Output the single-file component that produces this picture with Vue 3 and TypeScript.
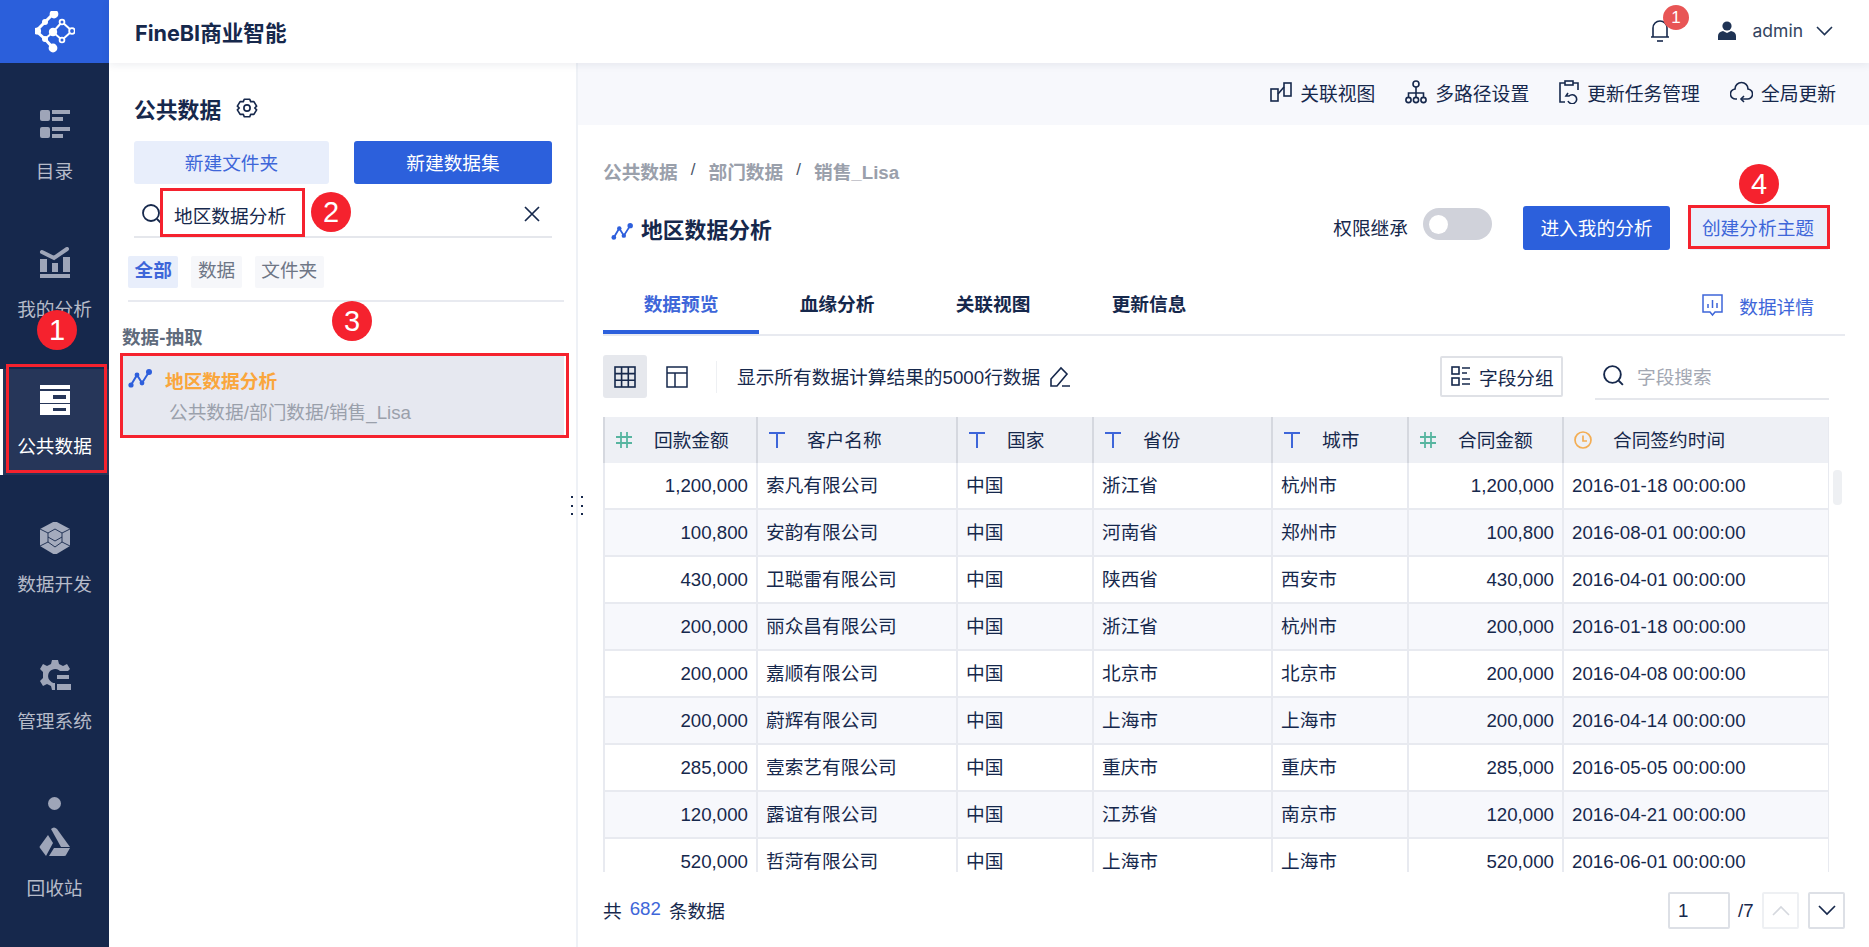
<script setup lang="ts">
interface NavItem { key: string; label: string; active?: boolean }
const navTop: NavItem[] = [
  { key: 'catalog', label: '目录' },
  { key: 'analysis', label: '我的分析' },
  { key: 'public', label: '公共数据', active: true },
  { key: 'dev', label: '数据开发' },
  { key: 'admin', label: '管理系统' },
]
const previewTabs = ['数据预览', '血缘分析', '关联视图', '更新信息']
const columns = [
  { type: 'num', label: '回款金额' },
  { type: 'text', label: '客户名称' },
  { type: 'text', label: '国家' },
  { type: 'text', label: '省份' },
  { type: 'text', label: '城市' },
  { type: 'num', label: '合同金额' },
  { type: 'time', label: '合同签约时间' },
]
const rows = [
  ['1,200,000', '索凡有限公司', '中国', '浙江省', '杭州市', '1,200,000', '2016-01-18 00:00:00'],
  ['100,800', '安韵有限公司', '中国', '河南省', '郑州市', '100,800', '2016-08-01 00:00:00'],
  ['430,000', '卫聪雷有限公司', '中国', '陕西省', '西安市', '430,000', '2016-04-01 00:00:00'],
  ['200,000', '丽众昌有限公司', '中国', '浙江省', '杭州市', '200,000', '2016-01-18 00:00:00'],
  ['200,000', '嘉顺有限公司', '中国', '北京市', '北京市', '200,000', '2016-04-08 00:00:00'],
  ['200,000', '蔚辉有限公司', '中国', '上海市', '上海市', '200,000', '2016-04-14 00:00:00'],
  ['285,000', '壹索艺有限公司', '中国', '重庆市', '重庆市', '285,000', '2016-05-05 00:00:00'],
  ['120,000', '露谊有限公司', '中国', '江苏省', '南京市', '120,000', '2016-04-21 00:00:00'],
  ['520,000', '哲菏有限公司', '中国', '上海市', '上海市', '520,000', '2016-06-01 00:00:00'],
]
const isNumCol = (i: number) => i === 0 || i === 5
</script>

<template>
  <div class="app">
    <aside class="sidebar">
      <div class="logo">
        <svg width="40" height="42" viewBox="0 0 40 42">
          <g stroke="#fff" stroke-width="2.4" fill="none">
            <path d="M19 2 L10 11 L1 20 L10 28 L18 37" stroke-width="3" />
            <path d="M10 28 L18 21 L27 29 L37 20 L27 11 L18 21" stroke-width="2" />
          </g>
          <g fill="#fff">
            <circle cx="19" cy="3" r="4.4" />
            <circle cx="10" cy="11" r="3" />
            <circle cx="2.5" cy="20" r="3.6" />
            <circle cx="18" cy="21" r="4.2" />
            <circle cx="10" cy="28" r="3" />
            <circle cx="18" cy="37" r="4.4" />
          </g>
          <g fill="#2b5fdb" stroke="#fff" stroke-width="1.8">
            <circle cx="27" cy="11" r="2.4" />
            <circle cx="37" cy="20" r="2.8" />
            <circle cx="27" cy="29" r="2.4" />
          </g>
        </svg>
      </div>
      <nav class="nav">
        <div v-for="item in navTop" :key="item.key" class="nav-item" :class="{ active: item.active }">
          <svg class="nav-icon" width="32" height="32" viewBox="0 0 32 32">
            <g v-if="item.key === 'catalog'" fill="#9ea5b8">
              <rect x="1" y="1" width="10" height="11" rx="2" />
              <rect x="13" y="1" width="18" height="4" />
              <rect x="13" y="8" width="11" height="4" />
              <rect x="1" y="18" width="10" height="11" rx="2" />
              <rect x="13" y="18" width="18" height="4" />
              <rect x="13" y="25" width="11" height="4" />
            </g>
            <g v-else-if="item.key === 'analysis'" fill="#9ea5b8">
              <path d="M3 5 L15 11 L28 2" fill="none" stroke="#9ea5b8" stroke-width="4" stroke-linecap="round" />
              <rect x="1" y="12" width="7" height="13" />
              <rect x="13" y="16" width="6" height="9" />
              <rect x="24" y="10" width="7" height="15" />
              <rect x="1" y="27" width="30" height="4" />
            </g>
            <g v-else-if="item.key === 'public'" fill="#fff">
              <rect x="1" y="1" width="30" height="4" />
              <path fill-rule="evenodd" d="M1 7 H31 V19 H1 Z M14 11 V15 H27 V11 Z" />
              <path fill-rule="evenodd" d="M1 20 H31 V31 H1 Z M14 24 V27 H27 V24 Z" />
            </g>
            <g v-else-if="item.key === 'dev'">
              <path d="M16 -1 L31 7 V24 L16 33 L1 24 V7 Z" fill="#a4abbd" />
              <path d="M16 7 L23 11 V20 L16 25 L9 20 V11 Z M1 7 L9 11 M31 7 L23 11 M9 20 L1 24 M23 20 L31 24 M9 15 L16 19 L23 15" fill="none" stroke="#16284c" stroke-width="0.9" />
            </g>
            <g v-else fill="#9ea5b8">
              <path d="M13 1 H19 L20 5 L24 7 L28 5 L31 10 L29 12 H21 A7 7 0 1 0 16 24 V31 H13 L12 27 L8 25 L4 27 L1 22 L4 19 V13 L1 10 L4 5 L8 7 L12 5 Z" />
              <rect x="18" y="16" width="12" height="4" />
              <rect x="18" y="25" width="14" height="6" />
            </g>
          </svg>
          <span class="nav-label">{{ item.label }}</span>
        </div>
        <div class="nav-dot"></div>
        <div class="nav-item">
          <svg class="nav-icon" width="32" height="32" viewBox="0 0 32 32">
            <g fill="#9ea5b8">
              <path d="M12 3 Q15 0 18 3 L31 21 H22 Z" />
              <path d="M9 9 L14 17 L7 30 L1 22 Q0 21 1 20 Z" />
              <path d="M15 22 H31 L27 29 Q27 30 25 30 H10 Z" />
            </g>
          </svg>
          <span class="nav-label">回收站</span>
        </div>
      </nav>
    </aside>

    <div class="main">
      <header class="topbar">
        <div class="brand">FineBI商业智能</div>
        <div class="top-right">
          <svg class="bell" width="20" height="23" viewBox="0 0 20 23" fill="none" stroke="#16284c" stroke-width="1.6">
            <path d="M1 18 H19 M3 18 V9 A7 7 0 0 1 17 9 V18" />
            <path d="M7 22 H13" />
          </svg>
          <svg class="user" width="18" height="19" viewBox="0 0 18 19" fill="#1f3354">
            <circle cx="9" cy="5" r="4.6" />
            <path d="M0 19 V15 Q0 11 5 10 L9 12 L13 10 Q18 11 18 15 V19 Z" />
          </svg>
          <span class="user-name">admin</span>
          <svg width="17" height="10" viewBox="0 0 17 10" fill="none" stroke="#1f3354" stroke-width="1.6">
            <path d="M1 1 L8.5 8.5 L16 1" />
          </svg>
        </div>
      </header>

      <div class="body">
        <section class="panel">
          <div class="panel-title">
            <span>公共数据</span>
            <svg width="22" height="22" viewBox="0 0 24 24" fill="none" stroke="#16284c" stroke-width="1.8" stroke-linejoin="round">
              <path d="M9 2.5 H15 L16 5 L19.5 5 L22.5 10 L20.5 12 L22.5 14 L19.5 19 L16 19 L15 21.5 H9 L8 19 L4.5 19 L1.5 14 L3.5 12 L1.5 10 L4.5 5 L8 5 Z" />
              <circle cx="12" cy="12" r="3.4" />
            </svg>
          </div>
          <div class="panel-actions">
            <div class="btn btn-light folder-btn">新建文件夹</div>
            <div class="btn btn-primary set-btn">新建数据集</div>
          </div>
          <div class="panel-search">
            <svg width="22" height="22" viewBox="0 0 22 22" fill="none" stroke="#16284c" stroke-width="1.8">
              <circle cx="10" cy="10" r="8" />
              <path d="M16 16 L20 20" />
            </svg>
            <span class="search-value">地区数据分析</span>
            <svg class="search-clear" width="16" height="16" viewBox="0 0 16 16" fill="none" stroke="#16284c" stroke-width="1.7">
              <path d="M1 1 L15 15 M15 1 L1 15" />
            </svg>
          </div>
          <div class="filter-tabs">
            <span class="filter on">全部</span>
            <span class="filter">数据</span>
            <span class="filter">文件夹</span>
          </div>
          <div class="section-label">数据-抽取</div>
          <div class="result">
            <div class="result-head">
              <svg width="24" height="22" viewBox="0 0 24 22" fill="none">
                <path d="M3 17 L9 7 L14 15 L21 4" stroke="#2e5fdc" stroke-width="2" />
                <circle cx="3" cy="17" r="2.6" fill="#2e5fdc" />
                <circle cx="9" cy="7" r="2.4" fill="#2e5fdc" />
                <circle cx="14" cy="15" r="2.4" fill="#2e5fdc" />
                <circle cx="21" cy="4" r="3" fill="#2e5fdc" />
              </svg>
              <span class="result-name">地区数据分析</span>
            </div>
            <div class="result-path">公共数据/部门数据/销售_Lisa</div>
          </div>
        </section>

        <section class="content">
          <div class="actions-bar">
            <div class="action">
              <svg width="22" height="20" viewBox="0 0 22 20" fill="none" stroke="#16284c" stroke-width="1.6">
                <rect x="1" y="7" width="7" height="12" />
                <rect x="14" y="1" width="7" height="13" />
                <path d="M8 12 L14 5" />
              </svg>
              <span>关联视图</span>
            </div>
            <div class="action">
              <svg width="22" height="24" viewBox="0 0 22 24" fill="none" stroke="#16284c" stroke-width="1.6">
                <circle cx="11" cy="4" r="3" />
                <circle cx="3.5" cy="20" r="2.6" />
                <circle cx="11" cy="20" r="2.6" />
                <circle cx="18.5" cy="20" r="2.6" />
                <path d="M11 7 V17 M3.5 17 V13 H18.5 V17" />
              </svg>
              <span>多路径设置</span>
            </div>
            <div class="action">
              <svg width="20" height="24" viewBox="0 0 20 24" fill="none" stroke="#16284c" stroke-width="1.6">
                <path d="M6 3 H1 V22 H6 M14 3 H19 V10" />
                <rect x="6" y="1" width="8" height="4" />
                <path d="M9 13 L7 16 L10 16 A4.5 4.5 0 1 1 9 21" />
              </svg>
              <span>更新任务管理</span>
            </div>
            <div class="action">
              <svg width="23" height="24" viewBox="0 0 23 24" fill="none" stroke="#16284c" stroke-width="1.6">
                <path d="M7 19 H6 A5 5 0 0 1 5 9 A6.5 6.5 0 0 1 18 9 A5 5 0 0 1 17 19 H11" />
                <path d="M14 16 L11 19 L14 22" />
              </svg>
              <span>全局更新</span>
            </div>
          </div>

          <div class="detail">
            <div class="crumbs">
              <span>公共数据</span><i>/</i><span>部门数据</span><i>/</i><span>销售_Lisa</span>
            </div>
            <div class="title-row">
              <svg class="title-icon" width="22" height="20" viewBox="0 0 24 22" fill="none">
                <path d="M3 17 L9 7 L14 15 L21 4" stroke="#2e5fdc" stroke-width="2" />
                <circle cx="3" cy="17" r="2.6" fill="#2e5fdc" />
                <circle cx="9" cy="7" r="2.4" fill="#2e5fdc" />
                <circle cx="14" cy="15" r="2.4" fill="#2e5fdc" />
                <circle cx="21" cy="4" r="3" fill="#2e5fdc" />
              </svg>
              <h1 class="title">地区数据分析</h1>
              <span class="inherit">权限继承</span>
              <span class="toggle"><span class="knob"></span></span>
              <div class="btn btn-primary enter-btn">进入我的分析</div>
              <div class="btn btn-light create-btn">创建分析主题</div>
            </div>

            <div class="tabs">
              <div v-for="(tab, i) in previewTabs" :key="tab" class="tab" :class="{ on: i === 0 }">{{ tab }}</div>
              <div class="tab-detail">
                <svg width="21" height="23" viewBox="0 0 21 23" fill="none" stroke="#3e66d9" stroke-width="1.5">
                  <path d="M1 1 H20 V18 H13 L10.5 21 L8 18 H1 Z" />
                  <path d="M6 10 V14 M10.5 6 V14 M15 9 V14" />
                </svg>
                <span>数据详情</span>
              </div>
            </div>

            <div class="tool-row">
              <div class="view-btn on">
                <svg width="22" height="22" viewBox="0 0 22 22" fill="none" stroke="#16284c" stroke-width="1.6">
                  <rect x="1" y="1" width="20" height="20" />
                  <path d="M1 7.6 H21 M1 14.3 H21 M7.6 1 V21 M14.3 1 V21" />
                </svg>
              </div>
              <div class="view-btn">
                <svg width="22" height="22" viewBox="0 0 22 22" fill="none" stroke="#16284c" stroke-width="1.5">
                  <rect x="1" y="1" width="20" height="20" />
                  <path d="M1 7 H21 M9 7 V21" />
                </svg>
              </div>
              <div class="tool-sep"></div>
              <span class="tool-text">显示所有数据计算结果的5000行数据</span>
              <svg class="edit" width="23" height="22" viewBox="0 0 23 22" fill="none" stroke="#16284c" stroke-width="1.6">
                <path d="M3 13 L13 2 L19 8 L9 20 H3 Z M14 20 H22" />
              </svg>
              <div class="group-btn">
                <svg width="20" height="20" viewBox="0 0 20 20" fill="none" stroke="#16284c" stroke-width="1.6">
                  <rect x="1" y="1" width="7" height="7" />
                  <rect x="1" y="12" width="7" height="7" />
                  <path d="M11 2 H19 M11 7 H16 M11 13 H19 M11 18 H19" />
                </svg>
                <span>字段分组</span>
              </div>
              <div class="field-search">
                <svg width="23" height="23" viewBox="0 0 22 22" fill="none" stroke="#16284c" stroke-width="1.8">
                  <circle cx="10" cy="10" r="8" />
                  <path d="M16 16 L20 20" />
                </svg>
                <span>字段搜索</span>
              </div>
            </div>

            <div class="table-wrap">
              <div class="table">
                <div class="tr th">
                  <div v-for="col in columns" :key="col.label" class="cell head-cell">
                    <svg class="type-icon" width="18" height="18" viewBox="0 0 18 18" fill="none">
                      <path v-if="col.type === 'num'" d="M6 1 V17 M12 1 V17 M1 6 H17 M1 12 H17" stroke="#57b5a0" stroke-width="1.8" />
                      <path v-else-if="col.type === 'text'" d="M1 2 H17 M9 2 V17" stroke="#3e66d9" stroke-width="2" />
                      <g v-else stroke="#f3ad53" stroke-width="1.7">
                        <circle cx="9" cy="9" r="8" />
                        <path d="M9 4.5 V10 H13" />
                      </g>
                    </svg>
                    <span>{{ col.label }}</span>
                  </div>
                </div>
                <div v-for="(row, r) in rows" :key="r" class="tr" :class="{ odd: r % 2 === 1 }">
                  <div v-for="(val, c) in row" :key="c" class="cell" :class="{ right: isNumCol(c) }">{{ val }}</div>
                </div>
              </div>
              <div class="scroll-thumb"></div>
            </div>

            <div class="footer">
              <div class="total">共<b>682</b>条数据</div>
              <div class="pager">
                <div class="page-input">1</div>
                <span class="page-total">/7</span>
                <div class="page-btn disabled">
                  <svg width="18" height="11" viewBox="0 0 18 11" fill="none" stroke="#d5d8de" stroke-width="1.6"><path d="M1 10 L9 2 L17 10" /></svg>
                </div>
                <div class="page-btn">
                  <svg width="18" height="11" viewBox="0 0 18 11" fill="none" stroke="#16284c" stroke-width="1.7"><path d="M1 1 L9 9 L17 1" /></svg>
                </div>
              </div>
            </div>
          </div>
        </section>
      </div>
    </div>

    <div class="grip grip-a"><i></i><i></i><i></i></div>
    <div class="grip grip-b"><i></i><i></i><i></i></div>
    <span class="bell-badge">1</span>

    <div class="mark mark-1"></div>
    <div class="mark mark-2"></div>
    <div class="mark mark-3"></div>
    <div class="mark mark-4"></div>
    <span class="pin pin-1">1</span>
    <span class="pin pin-2">2</span>
    <span class="pin pin-3">3</span>
    <span class="pin pin-4">4</span>
  </div>
</template>

<style>
html, body { margin: 0; padding: 0; background: #fff; }
</style>

<style scoped>
.app {
  position: relative;
  display: flex;
  width: 1869px;
  height: 947px;
  overflow: hidden;
  background: #fff;
  color: #16284c;
  font-family: "Liberation Sans", "Noto Sans CJK SC", sans-serif;
  font-size: 18.7px;
}
.sidebar { width: 109px; flex: none; background: #16284c; display: flex; flex-direction: column; }
.logo { height: 63px; background: #2b5fdb; display: flex; align-items: center; justify-content: center; padding-left: 1px; box-sizing: border-box; }
.nav { display: flex; flex-direction: column; padding-top: 31px; }
.nav-item {
  height: 106px;
  margin-bottom: 31.5px;
  display: flex;
  flex-direction: column;
  align-items: center;
  box-sizing: border-box;
  padding-top: 15px;
  color: #b6bbc9;
}
.nav-item.active { background: #263659; color: #fff; border-left: 3px solid #fff; }
.nav-item.active .nav-icon { margin-left: -3px; }
.nav-item.active .nav-label { margin-left: -3px; }
.nav-label { margin-top: 17px; line-height: 28px; font-size: 18.7px; }
.nav-dot { width: 13px; height: 13px; border-radius: 50%; background: #9ea5b8; margin: 15px auto 1px; }
.nav-dot + .nav-item { margin-bottom: 0; }

.main { flex: 1; min-width: 0; display: flex; flex-direction: column; }
.topbar {
  height: 63px;
  flex: none;
  display: flex;
  align-items: center;
  justify-content: space-between;
  padding: 0 36px 0 26px;
  box-shadow: 0 2px 8px rgba(22, 40, 76, 0.08);
  position: relative;
  z-index: 1;
  background: #fff;
}
.brand { font-family: Inter, "Noto Sans CJK SC", sans-serif; font-weight: 700; font-size: 21.6px; color: #16284c; }
.top-right { display: flex; align-items: center; padding-bottom: 2px; }
.bell { margin-right: 48px; margin-left: 2px; }
.user { margin-right: 17px; }
.user-name { font-family: Inter, sans-serif; font-size: 17.5px; margin-right: 13px; color: #33445f; }

.body { flex: 1; display: flex; min-height: 0; }
.panel { width: 469px; flex: none; box-sizing: border-box; border-right: 2px solid #eef1f6; padding: 30px 0 0 25px; display: flex; flex-direction: column; }
.panel-title { display: flex; align-items: center; height: 30px; font-size: 21.8px; font-weight: 700; gap: 15px; }
.panel-actions { display: flex; gap: 25px; margin-top: 18px; }
.btn { display: flex; align-items: center; justify-content: center; height: 43px; border-radius: 3px; box-sizing: border-box; padding-bottom: 3px; }
.btn-light { background: #e8eefb; color: #3e66d9; }
.btn-primary { background: #2c60dc; color: #fff; }
.folder-btn { width: 195px; }
.set-btn { width: 198px; }
.panel-search { width: 418px; height: 46px; margin-top: 8px; box-sizing: border-box; border-bottom: 2px solid #e5e7ec; display: flex; align-items: center; padding: 0 10px 0 7px; }
.search-value { margin-left: 11px; }
.search-clear { margin-left: auto; margin-right: 2px; }
.filter-tabs { display: flex; gap: 13px; margin: 18px 0 0 -6px; width: 436px; padding-bottom: 12px; border-bottom: 2px solid #e8eaf0; }
.filter { height: 32px; line-height: 30px; padding: 0 6.5px; border-radius: 2px; background: #f6f7fa; color: #6e7686; }
.filter.on { background: #e8eefb; color: #3e66d9; font-weight: 700; }
.section-label { margin: 23px 0 0 -12px; height: 26px; line-height: 26px; font-weight: 700; font-size: 18.6px; color: #5f6b7c; }
.result { margin: 5px 0 0 -11px; width: 441px; height: 79px; box-sizing: border-box; background: #e6e8f0; padding: 6px 0 0 5px; }
.result-head { display: flex; align-items: center; gap: 13px; height: 34px; }
.result-name { color: #faa63c; font-weight: 700; }
.result-path { color: #9aa0ab; margin: 3px 0 0 41px; line-height: 28px; }

.content { flex: 1; min-width: 0; display: flex; flex-direction: column; }
.actions-bar { height: 62px; flex: none; box-sizing: border-box; background: #f7f8fc; display: flex; align-items: center; justify-content: flex-end; gap: 30px; padding: 0 33px 4px 0; font-size: 18.8px; }
.action { display: flex; align-items: center; gap: 8px; }
.detail { padding: 30px 24px 0 25px; }
.crumbs { height: 30px; margin-bottom: 20px; display: flex; align-items: center; color: #9aa0ab; font-weight: 700; font-size: 18.7px; }
.crumbs i { font-style: normal; font-weight: 400; color: #4b5568; margin: 0 13px; font-size: 17px; }
.title-row { height: 45px; display: flex; align-items: center; padding-left: 8px; }
.title-icon { margin-top: 8px; }
.title { margin: 8px 0 0 8px; font-size: 21.8px; font-weight: 700; line-height: 1.2; }
.inherit { margin-left: auto; margin-right: 15px; margin-top: -2px; }
.toggle { width: 69px; height: 32px; margin-top: -7px; border-radius: 16px; background: #d0d2da; display: flex; align-items: center; padding-left: 6px; box-sizing: border-box; margin-right: 31px; }
.knob { width: 19px; height: 19px; border-radius: 50%; background: #fff; }
.enter-btn { width: 147px; height: 44px; margin-right: 20px; }
.create-btn { width: 138px; height: 44px; margin-right: 17px; border-radius: 0; padding-right: 2px; }

.tabs { display: flex; height: 56px; margin-top: 30px; box-sizing: border-box; border-bottom: 2px solid #e8eaf0; }
.tab { width: 156px; height: 54px; box-sizing: border-box; text-align: center; line-height: 50px; font-weight: 700; border-bottom: 4px solid transparent; }
.tab.on { color: #3e66d9; border-bottom-color: #2c60dc; }
.tab-detail { margin-left: auto; display: flex; align-items: center; gap: 16px; height: 50px; padding-right: 31px; color: #3e66d9; }

.tool-row { display: flex; align-items: center; height: 43px; margin-top: 19px; margin-right: 16px; }
.view-btn { width: 44px; height: 43px; border-radius: 3px; display: flex; align-items: center; justify-content: center; margin-right: 8px; }
.view-btn.on { background: #e6e8ed; }
.tool-sep { width: 1px; height: 32px; background: #eef0f3; margin: 0 20px 0 9px; }
.tool-text { padding-bottom: 2px; }
.edit { margin-left: 8px; }
.group-btn { margin-left: auto; width: 123px; height: 41px; box-sizing: border-box; border: 2px solid #dfe1e6; border-radius: 2px; display: flex; align-items: center; gap: 8px; padding: 0 0 1px 9px; }
.field-search { width: 234px; margin-left: 32px; height: 45px; box-sizing: border-box; border-bottom: 2px solid #e5e7ec; margin-top: 2px; display: flex; align-items: center; gap: 12px; padding: 0 0 2px 7px; color: #a3a8b3; }

.table-wrap { position: relative; height: 455px; margin-top: 19px; overflow: hidden; }
.table { width: 1226px; }
.tr { display: grid; grid-template-columns: 153px 200px 136px 179px 136px 155px 267px; height: 47px; box-sizing: border-box; border-bottom: 2px solid #e8eaf0; }
.tr.odd { background: #f7f8fc; }
.tr.th { height: 46px; background: #eef0f5; border-bottom: 0; }
.cell { box-sizing: border-box; border-left: 2px solid #e8eaf0; padding: 0 8px 0 8px; line-height: 45px; white-space: nowrap; overflow: hidden; }
.cell:last-child { border-right: 1px solid #e8eaf0; }
.cell.right { text-align: right; }
.head-cell { display: flex; align-items: center; gap: 21px; padding-left: 10px; border-left-color: #d5d8df; }
.type-icon { flex: none; }
.scroll-thumb { position: absolute; left: 1230px; top: 53px; width: 9px; height: 35px; border-radius: 4px; background: #eef0f3; }

.footer { display: flex; align-items: center; justify-content: space-between; height: 37px; margin-top: 20px; }
.total { display: flex; align-items: center; padding-bottom: 3px; }
.total b { font-weight: 400; color: #3e66d9; margin: 0 8px; }
.pager { display: flex; align-items: center; }
.page-input { width: 62px; height: 37px; box-sizing: border-box; border: 2px solid #dde0e6; border-radius: 2px; padding-left: 8px; line-height: 34px; }
.page-total { margin-left: 8px; width: 24px; }
.page-btn { width: 37px; height: 37px; box-sizing: border-box; border: 2px solid #dde0e6; border-radius: 2px; display: flex; align-items: center; justify-content: center; }
.page-btn.disabled { border-color: #eef0f3; margin-right: 9px; }

.grip { position: absolute; top: 496px; display: flex; flex-direction: column; gap: 6.5px; z-index: 2; }
.grip i { display: block; width: 2px; height: 2px; background: #16284c; }
.grip-a { left: 571px; }
.grip-b { left: 581px; }
.bell-badge { position: absolute; left: 1663px; top: 5px; width: 26px; height: 25px; border-radius: 50%; background: #e85555; color: #fff; font-size: 17px; text-align: center; line-height: 25px; z-index: 3; }

.mark { position: absolute; box-sizing: border-box; border: 3px solid #f5222e; z-index: 4; }
.mark-1 { left: 6px; top: 364px; width: 101px; height: 109px; }
.mark-2 { left: 160px; top: 188px; width: 145px; height: 49px; }
.mark-3 { left: 120px; top: 353px; width: 449px; height: 85px; }
.mark-4 { left: 1688px; top: 205px; width: 142px; height: 44px; }
.pin { position: absolute; width: 40px; height: 40px; border-radius: 50%; background: #f5222e; color: #fff; font-size: 29px; line-height: 40px; text-align: center; z-index: 5; }
.pin-1 { left: 37px; top: 310px; }
.pin-2 { left: 311px; top: 192px; }
.pin-3 { left: 332px; top: 301px; }
.pin-4 { left: 1739px; top: 164px; }
</style>
